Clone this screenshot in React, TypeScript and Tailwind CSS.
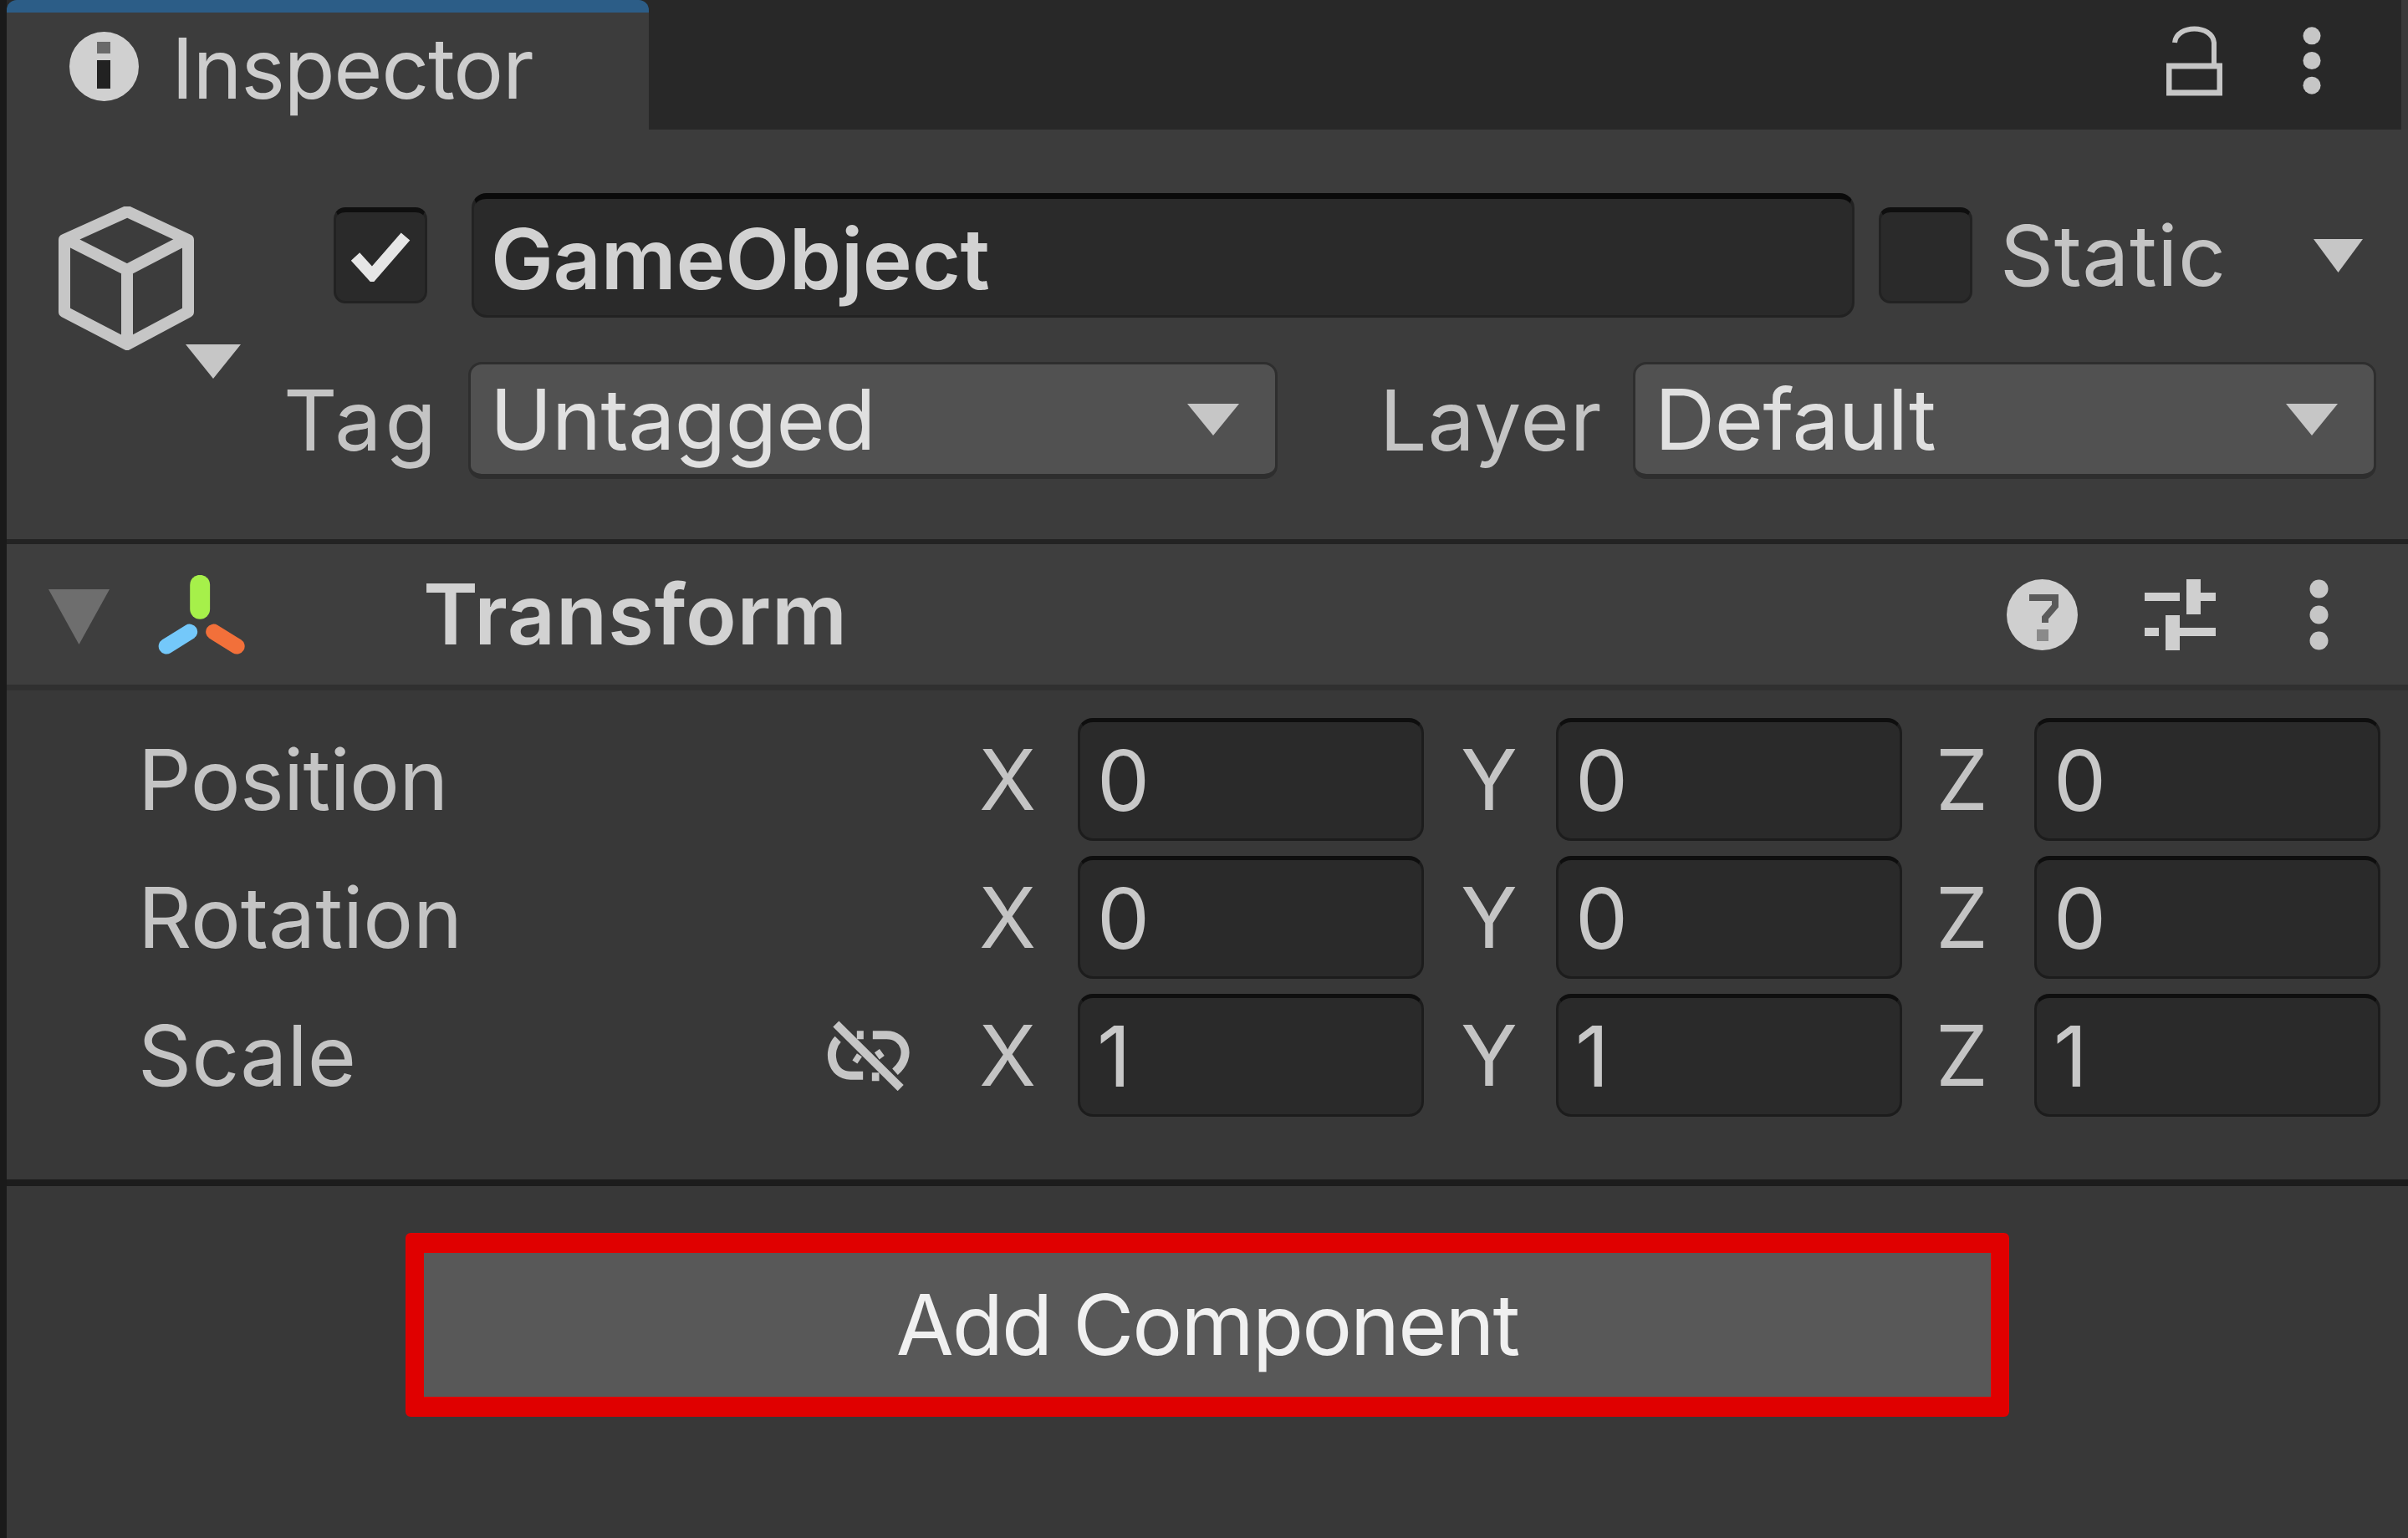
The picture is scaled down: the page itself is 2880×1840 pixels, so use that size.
import type { ReactNode } from 'react'

const ICON = '#c6c6c6'

function Caret({ className, color = ICON }: { className: string; color?: string }) {
  return (
    <svg className={className} viewBox="0 0 60 40" preserveAspectRatio="none">
      <polygon points="0,0 60,0 30,40" fill={color} />
    </svg>
  )
}

function Dots({ className }: { className: string }) {
  return (
    <svg className={className} viewBox="0 0 23 84">
      <ellipse cx="11.5" cy="11" rx="11" ry="11" fill={ICON} />
      <ellipse cx="11.5" cy="42" rx="11" ry="11" fill={ICON} />
      <ellipse cx="11.5" cy="73" rx="11" ry="11" fill={ICON} />
    </svg>
  )
}

function CubeIcon() {
  return (
    <svg className="w-[220px] h-[206px]" viewBox="0 0 220 206" fill="none">
      <path
        d="M84 6 L157 40 V126 L84 165 L9 126 V40 Z M9 38 L84 76 L157 38 M84 76 V165"
        stroke={ICON}
        strokeWidth="14"
        strokeLinejoin="round"
      />
      <polygon points="154,165 220,165 187,206" fill={ICON} />
    </svg>
  )
}

function Checkbox({ checked }: { checked?: boolean }) {
  return (
    <div className="w-[112px] h-[115px] shrink-0 rounded-[14px] bg-[#2a2a2a] border-t-[6px] border-x-[3px] border-b-[3px] border-t-[#0f0f0f] border-x-[#222222] border-b-[#222222] flex items-center justify-center">
      {checked && (
        <svg className="w-[72px] h-[60px]" viewBox="0 0 72 60" fill="none">
          <path d="M6 30 L26 52 L66 6" stroke="#e6e6e6" strokeWidth="14" />
        </svg>
      )}
    </div>
  )
}

function Dropdown({ value, className }: { value: string; className: string }) {
  return (
    <div className={`h-[140px] rounded-[16px] bg-[#515151] border-[3px] border-[#2e2e2e] border-b-[6px] flex items-center pl-[23px] ${className}`}>
      <span className="text-[#e0e0e0] tracking-[-0.5px]">{value}</span>
      <Caret className="ml-auto mr-[43px] w-[62px] h-[38px]" />
    </div>
  )
}

function Axis({ name, value }: { name: string; value: string }) {
  return (
    <div className="flex items-center">
      <span className={name === 'Y' ? 'w-[114px]' : 'w-[118px] -ml-[4px]'}>{name}</span>
      <div className="w-[414px] h-[147px] rounded-[18px] bg-[#2a2a2a] border-[3px] border-[#1c1c1c] border-t-[5px] border-t-[#0e0e0e] flex items-center pl-[20px] text-[#c8c8c8]">
        {value}
      </div>
    </div>
  )
}

function VectorRow({ label, value, icon, tight }: { label: string; value: string; icon?: ReactNode; tight?: boolean }) {
  return (
    <div className="flex items-center h-[147px]">
      <span className={tight ? 'flex-1 tracking-[-0.7px]' : 'flex-1'}>{label}</span>
      {icon}
      <div className="flex gap-[44px]">
        <Axis name="X" value={value} />
        <Axis name="Y" value={value} />
        <Axis name="Z" value={value} />
      </div>
    </div>
  )
}

function UnlinkIcon() {
  return (
    <svg className="w-[102px] h-[85px] mr-[86px]" viewBox="145 75 305 255" fill="none" stroke={ICON} strokeWidth="30">
      <path d="M190 145 C150 185 165 275 235 275 H280" />
      <path d="M315 130 H365 C430 130 460 205 395 262" />
      <path d="M183 90 L415 320" />
      <path d="M258 130 H282 M250 208 L268 220 M330 205 L348 192 M312 280 H338" />
    </svg>
  )
}

export default function App() {
  return (
    <div
      className="w-[2880px] h-[1840px] overflow-hidden bg-[#383838] border-l-[8px] border-l-[#1a1a1a] text-[100px] leading-none text-[#c4c4c4]"
      style={{ fontFamily: 'Inter, "Liberation Sans", sans-serif' }}
    >
      {/* tab bar */}
      <div className="h-[155px] bg-[#282828] border-r-[8px] border-r-[#3a3a3a] flex items-stretch">
        <div className="w-[768px] bg-[#3c3c3c] border-t-[15px] border-t-[#2c5d87] rounded-t-[12px] flex items-center pl-[75px] pb-[6px]">
          <svg className="w-[83px] h-[83px] mb-[6px]" viewBox="0 0 83 83">
            <circle cx="41.5" cy="41.5" r="41.5" fill="#d0d0d0" />
            <rect x="33" y="12" width="16" height="14" fill="#6a6a6a" />
            <rect x="33" y="34" width="16" height="34" fill="#222222" />
          </svg>
          <span className="ml-[39px] text-[#cdcdcd] tracking-[-1.4px]">Inspector</span>
        </div>
        <div className="ml-auto flex items-center gap-[96px] pr-[96px] pb-[10px]">
          <svg className="w-[67px] h-[84px]" viewBox="0 0 67 84" fill="none" stroke={ICON} strokeWidth="6">
            <path d="M3 48 H64 V80 H3 Z" strokeWidth="7" />
            <path d="M10 20 C12 -2 55 -2 57 20 V48" />
          </svg>
          <Dots className="w-[22px] h-[83px]" />
        </div>
      </div>

      {/* object header */}
      <div className="h-[490px] bg-[#3c3c3c] flex">
        <div className="w-[322px] shrink-0 pt-[92px] pl-[60px]">
          <CubeIcon />
        </div>
        <div className="flex-1 pt-[76px] pr-[30px]">
          <div className="flex items-center h-[149px] pl-[69px]">
            <Checkbox checked />
            <div className="ml-[53px] w-[1654px] h-[149px] rounded-[18px] bg-[#2a2a2a] border-[3px] border-[#222222] border-t-[7px] border-t-[#0a0a0a] flex items-center pl-[20px] pt-[4px] font-semibold text-[#d2d2d2] tracking-[-0.3px]">
              GameObject
            </div>
            <div className="ml-[29px]">
              <Checkbox />
            </div>
            <span className="ml-[33px] w-[435px] flex items-center tracking-[0.5px]">
              Static
              <Caret className="ml-auto mr-[1px] w-[59px] h-[40px]" />
            </span>
          </div>
          <div className="flex items-center h-[140px] mt-[53px] pl-[9px]">
            <span className="w-[221px] tracking-[4px]">Tag</span>
            <Dropdown value="Untagged" className="w-[968px]" />
            <span className="ml-[122px] w-[303px] tracking-[1px]">Layer</span>
            <Dropdown value="Default" className="w-[889px]" />
          </div>
        </div>
      </div>

      {/* transform */}
      <div className="h-[6px] bg-[#232323]" />
      <div className="h-[168px] bg-[#3e3e3e] flex items-center">
        <Caret className="ml-[50px] mt-[6px] w-[73px] h-[66px]" color="#6e6e6e" />
        <svg className="ml-[56px] w-[108px] h-[95px]" viewBox="140 70 325 285" fill="none" strokeLinecap="round">
          <path d="M297 105 V192" stroke="#a6f04a" strokeWidth="72" />
          <path d="M176 326 L260 274" stroke="#74c8fa" strokeWidth="56" />
          <path d="M346 274 L430 326" stroke="#f2703a" strokeWidth="56" />
        </svg>
        <span className="ml-[211px] font-semibold text-[#d2d2d2] tracking-[0.8px]">Transform</span>
        <div className="ml-auto flex items-center pr-[95px]">
          <svg className="w-[85px] h-[85px]" viewBox="0 0 85 85">
            <circle cx="42.5" cy="42.5" r="42.5" fill="#cfcfcf" />
            <path d="M27 22 H58 V32 L46 46 V52" fill="none" stroke="#5a5a5a" strokeWidth="8" />
            <rect x="36" y="60" width="14" height="14" fill="#8a8a8a" />
          </svg>
          <svg className="ml-[80px] w-[85px] h-[85px]" viewBox="0 0 85 85" fill="#cfcfcf">
            <rect x="0" y="16" width="42" height="10" />
            <rect x="50" y="0" width="17" height="42" />
            <rect x="67" y="16" width="18" height="10" />
            <rect x="0" y="58" width="17" height="10" />
            <rect x="25" y="43" width="17" height="42" />
            <rect x="42" y="58" width="43" height="10" />
          </svg>
          <Dots className="ml-[112px] w-[23px] h-[85px]" />
        </div>
      </div>
      <div className="h-[7px] bg-[#303030]" />
      <div className="h-[585px] pt-[33px] pl-[157px] pr-[33px] flex flex-col gap-[18px]">
        <VectorRow label="Position" value="0" tight />
        <VectorRow label="Rotation" value="0" />
        <VectorRow label="Scale" value="1" icon={<UnlinkIcon />} />
      </div>
      <div className="h-[8px] bg-[#1c1c1c]" />

      {/* add component */}
      <div className="pt-[56px] pl-[477px]">
        <div className="w-[1918px] h-[220px] rounded-[6px] border-x-[22px] border-y-[24px] border-[#e00000] bg-[#585858] flex items-center justify-center text-[#f0f0f0] tracking-[-2px]">
          Add Component
        </div>
      </div>
    </div>
  )
}
